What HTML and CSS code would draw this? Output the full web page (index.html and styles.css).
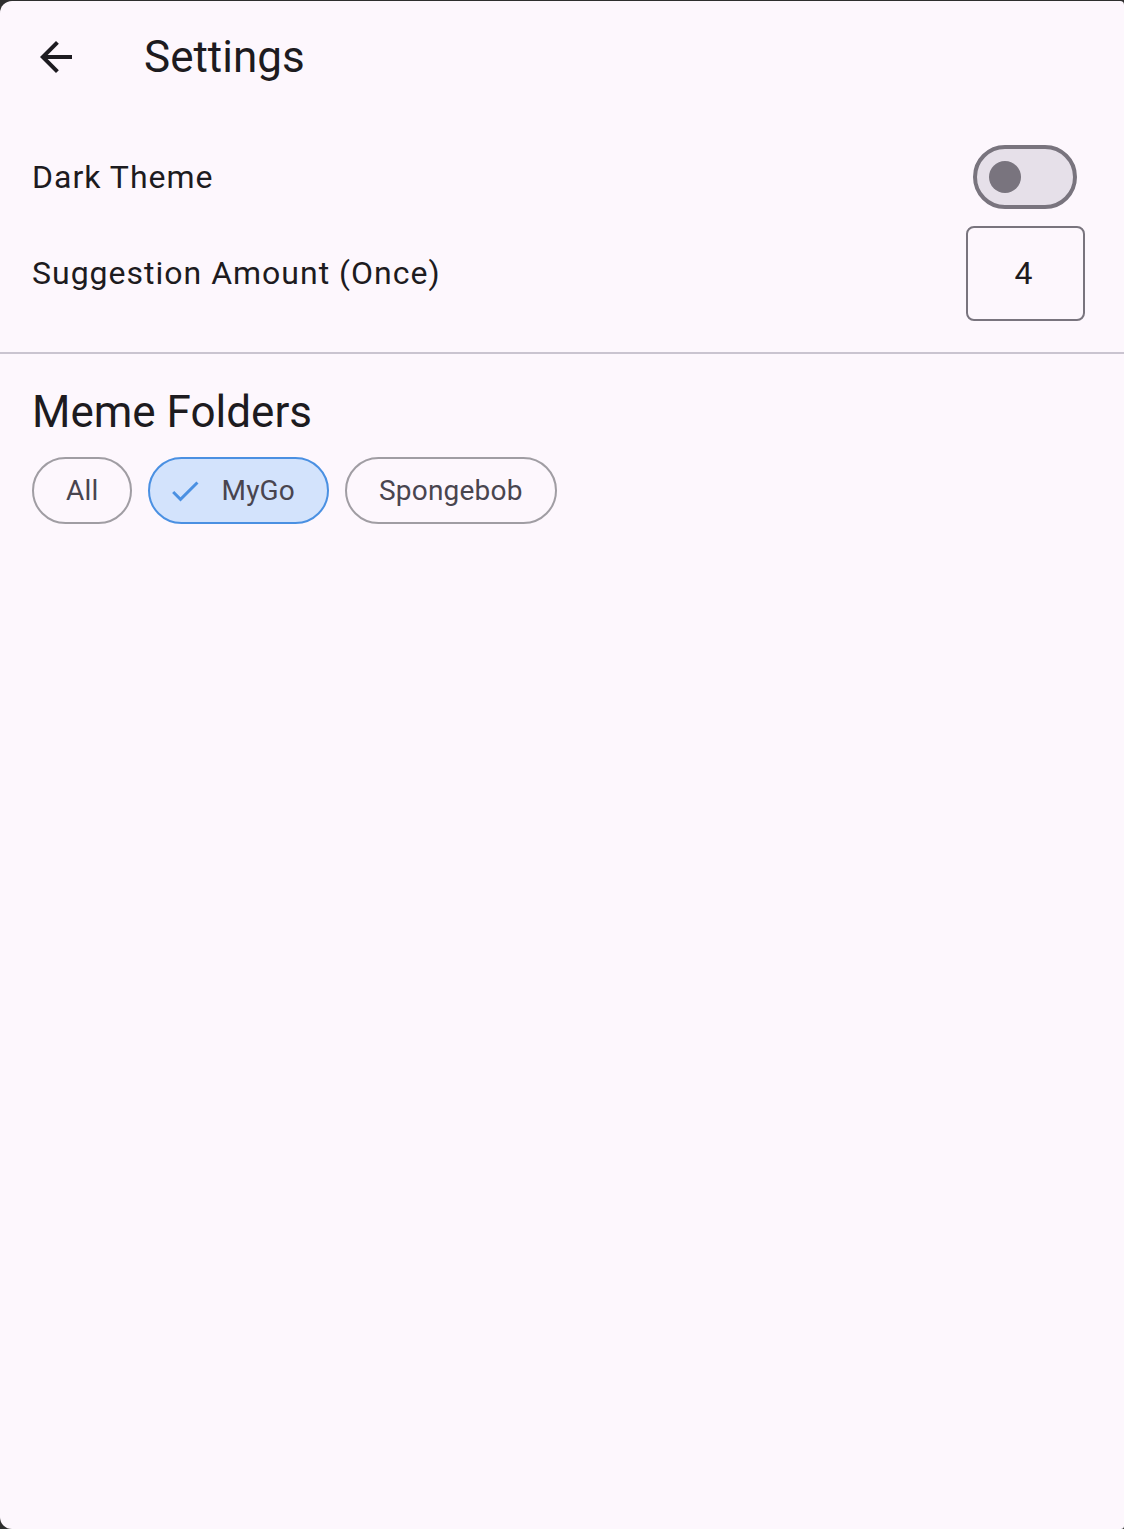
FILE: index.html
```html
<!DOCTYPE html>
<html lang="en">
<head>
<meta charset="utf-8">
<title>Settings</title>
<link rel="stylesheet" href="styles.css">
</head>
<body>
<div class="window">
  <header class="appbar">
    <div class="back">
      <svg width="48" height="48" viewBox="0 0 24 24"><path d="M20 11H7.83l5.59-5.59L12 4l-8 8 8 8 1.41-1.41L7.83 13H20v-2z" fill="#1d1b20"/></svg>
    </div>
    <h1 class="title">Settings</h1>
  </header>
  <section class="settings">
    <div class="row">
      <span class="label">Dark Theme</span>
      <div class="switch"><div class="thumb"></div></div>
    </div>
    <div class="row">
      <span class="label">Suggestion Amount (Once)</span>
      <div class="numbox">4</div>
    </div>
  </section>
  <hr class="divider">
  <section class="folders">
    <h2 class="heading">Meme Folders</h2>
    <div class="chips">
      <div class="chip">All</div>
      <div class="chip selected">
        <svg class="check" width="36" height="36" viewBox="0 0 24 24"><path d="M9 16.17L4.83 12l-1.42 1.41L9 19 21 7l-1.41-1.41z" fill="#4a90e2"/></svg>
        <span>MyGo</span>
      </div>
      <div class="chip">Spongebob</div>
    </div>
  </section>
</div>
</body>
</html>
```
FILE: styles.css
```css
html, body {
  margin: 0;
  padding: 0;
  background: #2e2e2e;
}
body {
  font-family: Roboto, "Noto Sans", sans-serif;
  color: #1d1b20;
}
.window {
  margin-top: 1px;
  height: 1528px;
  background: #fdf7fd;
  border-radius: 12px 4px 3px 12px;
  overflow: hidden;
}
.appbar {
  height: 111px;
  display: flex;
  align-items: center;
}
.back {
  width: 112px;
  height: 111px;
  display: flex;
  align-items: center;
  justify-content: center;
}
.title {
  margin: 0 0 0 32px;
  font-size: 44px;
  font-weight: 400;
  color: #1d1b20;
}
.settings {
  padding-top: 17px;
}
.row {
  height: 96px;
  display: flex;
  align-items: center;
  justify-content: space-between;
  padding: 0 40px 0 32px;
}
.label {
  font-size: 32px;
  letter-spacing: 1px;
  color: #1d1b20;
}
.switch {
  box-sizing: border-box;
  width: 104px;
  height: 64px;
  margin-right: 7px;
  border: 4px solid #79747e;
  border-radius: 32px;
  background: #e6e0e9;
  display: flex;
  align-items: center;
  padding-left: 12px;
}
.thumb {
  width: 32px;
  height: 32px;
  border-radius: 50%;
  background: #79747e;
}
.numbox {
  box-sizing: border-box;
  width: 119px;
  height: 95px;
  margin-right: -1px;
  padding-right: 4px;
  border: 2px solid #79747e;
  border-radius: 8px;
  display: flex;
  align-items: center;
  justify-content: center;
  font-size: 32px;
  color: #1d1b20;
}
.divider {
  margin: 31px 0 0 0;
  border: none;
  height: 2px;
  background: #cac4d0;
}
.folders {
  padding: 0 32px;
}
.heading {
  margin: 32px 0 0 0;
  font-size: 44px;
  line-height: 52px;
  font-weight: 400;
  color: #1d1b20;
}
.chips {
  margin-top: 19px;
  display: flex;
  gap: 16px;
}
.chip {
  box-sizing: border-box;
  height: 67px;
  border: 2px solid #a09da3;
  border-radius: 34px;
  padding: 0 32px;
  display: flex;
  align-items: center;
  font-size: 28px;
  letter-spacing: 0.2px;
  color: #49454f;
}
.chip.selected {
  padding-left: 17px;
  background: #d3e3fc;
  border-color: #4a90e2;
}
.check {
  margin-right: 18px;
}
```
